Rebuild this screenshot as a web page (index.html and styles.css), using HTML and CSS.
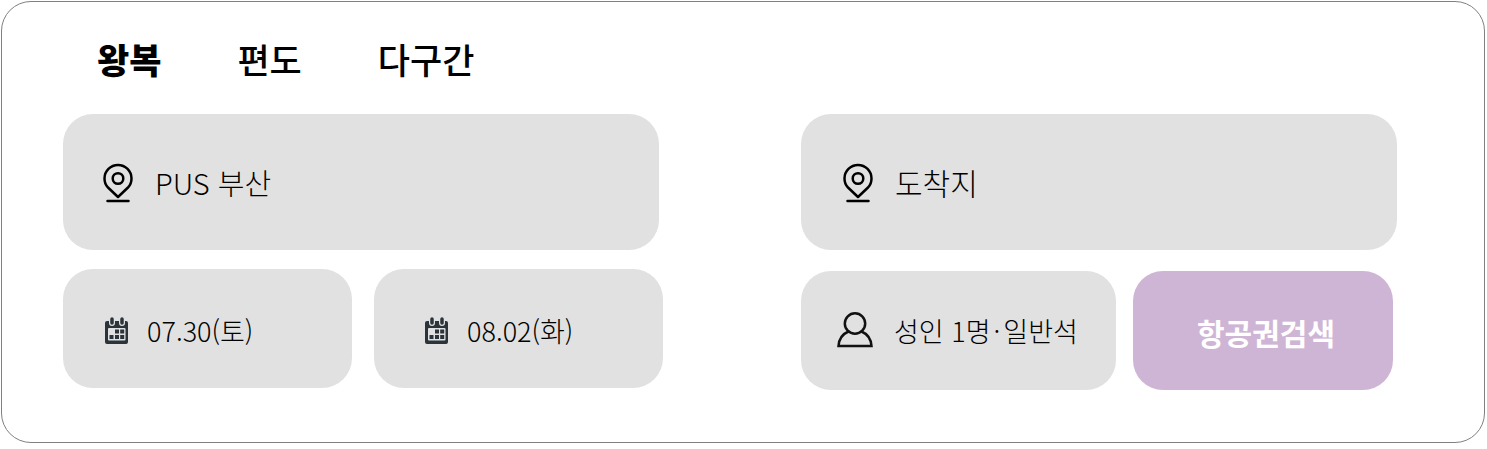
FILE: index.html
```html
<!DOCTYPE html>
<html lang="ko">
<head>
<meta charset="utf-8">
<title>항공권 검색</title>
<link rel="stylesheet" href="styles.css">
</head>
<body>
<svg class="defs" aria-hidden="true">
  <symbol id="pin" viewBox="0 0 32 40">
    <path d="M16 34L6 24.500C3.500 22 2.500 18.500 2.500 15.500a13.500 13.500 0 0 1 27 0C29.500 18.500 28.500 22 26 24.500Z" fill="none" stroke="currentColor" stroke-width="2.500" stroke-linejoin="round"/>
    <circle cx="16" cy="15.500" r="5.300" fill="none" stroke="currentColor" stroke-width="2.500"/>
    <path d="M5.500 38h21" stroke="currentColor" stroke-width="2.500" stroke-linecap="round"/>
  </symbol>
  <symbol id="calendar" viewBox="0 0 24 28">
    <path fill-rule="evenodd" d="M2 4h2v2a3 3 0 0 0 6 0V4h4v2a3 3 0 0 0 6 0V4h1a2 2 0 0 1 2 2v19a2 2 0 0 1-2 2H2a2 2 0 0 1-2-2V6a2 2 0 0 1 2-2ZM4 11a1 1 0 0 0-1 1v10.500a1 1 0 0 0 1 1h15.500a1 1 0 0 0 1-1V12a1 1 0 0 0-1-1Z" fill="currentColor"/>
    <path d="M7 2v4M17 2v4" stroke="currentColor" stroke-width="3.500" stroke-linecap="round"/>
    <path d="M10 12.500h4v4h-4zM15.200 12.500h4v4h-4zM4.500 18h4v4h-4zM10 18h4v4h-4zM15.200 18h4v4h-4z" fill="currentColor"/>
  </symbol>
</svg>
<main class="search-card">
  <nav class="trips" aria-label="여정">
    <button class="trip trip-active" type="button">왕복</button>
    <button class="trip" type="button">편도</button>
    <button class="trip" type="button">다구간</button>
  </nav>
  <form class="fields">
    <div class="column">
      <button class="field place place-from" type="button"><svg class="pin"><use href="#pin"/></svg><span>PUS 부산</span></button>
      <div class="dates">
        <button class="field date" type="button"><svg class="calendar"><use href="#calendar"/></svg><span>07.30(토)</span></button>
        <button class="field date date-return" type="button"><svg class="calendar"><use href="#calendar"/></svg><span>08.02(화)</span></button>
      </div>
    </div>
    <div class="column column-end">
      <button class="field place" type="button"><svg class="pin"><use href="#pin"/></svg><span>도착지</span></button>
      <div class="actions">
        <button class="field people" type="button"><svg class="person" viewBox="0 0 36 36"><circle cx="18" cy="11.500" r="10.200" fill="none" stroke="currentColor" stroke-width="2.500"/><path d="M11.500 19.500C5.500 22 2 27 1.500 34h33C34 27 30.500 22 24.500 19.500" fill="none" stroke="currentColor" stroke-width="2.500"/></svg><span>성인 1명<span class="dot">·</span>일반석</span></button>
        <button class="submit" type="button">항공권검색</button>
      </div>
    </div>
  </form>
</main>
</body>
</html>
```
FILE: styles.css
```css
* { box-sizing: border-box; }
body { margin: 0; padding: 1px; background: #fff; color: #000; font-family: "Noto Sans CJK KR", sans-serif; }
button { margin: 0; border: 0; padding: 0; background: none; color: inherit; font: inherit; white-space: nowrap; cursor: pointer; }
.defs { position: absolute; width: 0; height: 0; }
.search-card { margin-right: 1px; padding: 31px 87px 52px 61px; border: 1px solid #808080; border-radius: 30px; }
.trips { display: flex; gap: 76px; padding-left: 34px; margin-bottom: 29px; }
.trip { font-size: 35px; line-height: 52px; font-weight: 500; }
.trip-active { font-weight: 900; }
.fields { display: grid; grid-template-columns: 600fr 596fr; gap: 138px; }
.column { display: grid; gap: 19px; align-content: start; }
.column-end { gap: 21px; }
.field { display: flex; align-items: center; background: #e1e1e1; border-radius: 30px; font-weight: 300; }
.place { height: 136px; padding: 0 41px; gap: 21px; font-size: 30px; }
.place-from { margin-right: 4px; padding: 0 39px; font-size: 29px; }
.pin { width: 32px; height: 40px; margin-top: 2px; }
.dates { display: grid; grid-template-columns: 1fr 1fr; gap: 22px; }
.date { height: 119px; padding: 4px 42px 0; gap: 18px; font-size: 27px; }
.date-return { padding-left: 51px; }
.calendar { width: 24px; height: 28px; color: #2b343b; }
.actions { display: grid; grid-template-columns: 315fr 260fr; gap: 17px; margin-right: 4px; }
.people { height: 119px; padding: 0 36px; gap: 21px; font-size: 27px; }
.person { width: 36px; height: 36px; margin-bottom: 2px; color: #111; }
.dot { margin: 0 3px; }
.submit { padding: 2px 0 0 6px; border-radius: 30px; background: #cfb5d5; color: #fff; font-size: 30px; font-weight: 700; }
```
